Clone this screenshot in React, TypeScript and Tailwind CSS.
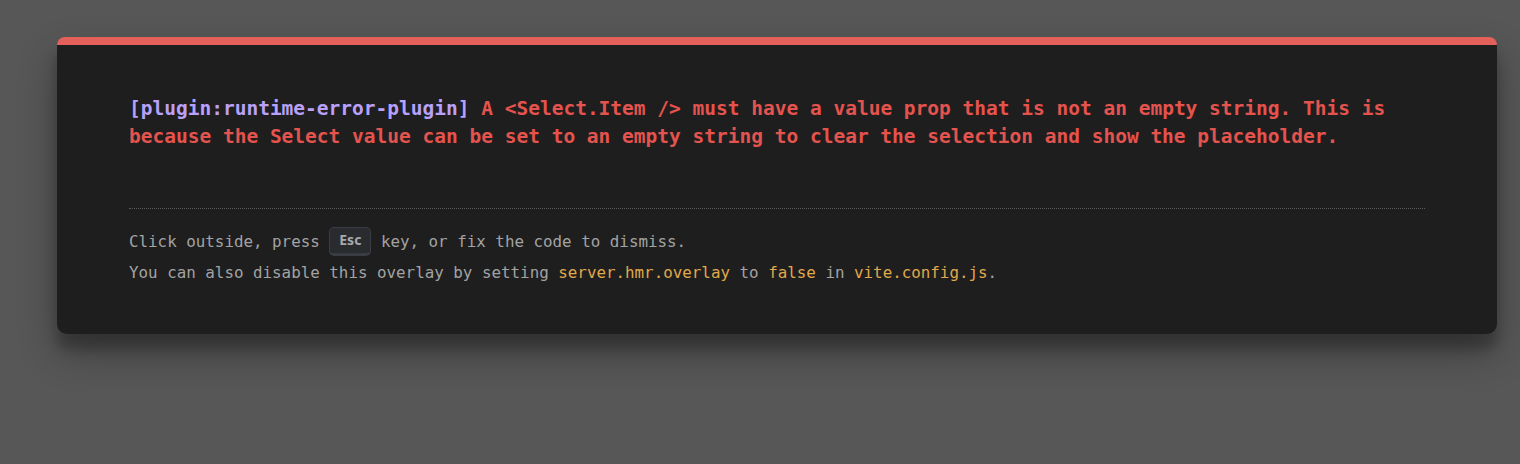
import React from "react";

export default function App() {
  return (
    <div className="w-full h-[464px] bg-[#575757] pt-[37px] pl-[57px] overflow-hidden">
      <div className="w-[1440px] bg-[#1e1e1e] rounded-t-[8px] rounded-b-[10px] border-t-[8px] border-[#e4605a] px-[72px] pt-[50px] pb-[46px] shadow-[0_19px_38px_rgba(0,0,0,0.30),0_15px_12px_rgba(0,0,0,0.22)] font-['DejaVu_Sans_Mono','Liberation_Mono',monospace]">
        <p className="text-[19.5px] leading-[28px] font-bold text-[#e4534d] whitespace-pre-wrap">
          <span className="text-[#b9a1fa]">[plugin:runtime-error-plugin]</span>{" "}
          <span>A &lt;Select.Item /&gt; must have a value prop that is not an empty string. This is because the Select value can be set to an empty string to clear the selection and show the placeholder.</span>
        </p>
        <div className="mt-[57px] border-t border-dotted border-[#5a5a5a] pt-[17px] text-[15.85px] leading-[31px] text-[#a3a3a3]">
          <p>
            Click outside, press{" "}
            <kbd className="inline-flex items-center justify-center align-middle h-[29px] w-[42px] rounded-[5px] bg-[#2a2b2f] border border-b-[3px] border-[#3a3c43] text-[14px] font-bold text-[#a8a9ad] leading-none -mt-[3px] font-['Noto_Sans','Liberation_Sans',sans-serif]">
              Esc
            </kbd>{" "}
            key, or fix the code to dismiss.
          </p>
          <p>
            You can also disable this overlay by setting{" "}
            <code className="text-[#e0a94c] font-[inherit]">server.hmr.overlay</code> to{" "}
            <code className="text-[#e0a94c] font-[inherit]">false</code> in{" "}
            <code className="text-[#e0a94c] font-[inherit]">vite.config.js</code>.
          </p>
        </div>
      </div>
    </div>
  );
}
